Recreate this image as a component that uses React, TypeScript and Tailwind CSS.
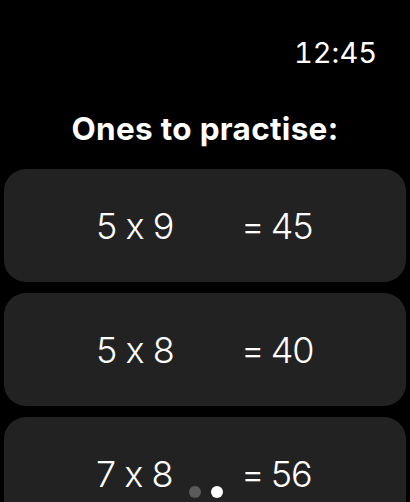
const rows = [
  { q: "5 x 9", a: "= 45" },
  { q: "5 x 8", a: "= 40" },
  { q: "7 x 8", a: "= 56" },
];

export default function App() {
  return (
    <div
      className="relative h-[502px] w-[410px] overflow-hidden bg-black text-white [font-feature-settings:'calt'_0]"
      style={{ fontFamily: "Inter, 'Noto Sans', sans-serif" }}
    >
      <div className="flex justify-end pr-[33px] pt-[38px]">
        <span className="text-[29px] leading-[30px] tabular-nums">12:45</span>
      </div>

      <h1 className="mt-[43px] text-center text-[31.5px] font-bold leading-[36px] tracking-[0.3px]">
        Ones to practise:
      </h1>

      <div className="mt-[22px] flex flex-col gap-[11px] px-[4px]">
        {rows.map((row) => (
          <div
            key={row.q}
            className="flex h-[113px] shrink-0 items-center rounded-[22px] bg-[#222222] pl-[92px]"
          >
            <span className="w-[145px] text-[36px] font-light leading-none tracking-[-1px]">{row.q}</span>
            <span className="text-[36px] font-light leading-none tracking-[-1px] [word-spacing:-2px]">{row.a}</span>
          </div>
        ))}
      </div>

      <div className="absolute bottom-[4px] left-0 right-0 flex justify-center gap-[10px] pl-[1px]">
        <span className="h-[12px] w-[12px] rounded-full bg-[#5a5a5a]" />
        <span className="h-[12px] w-[12px] rounded-full bg-white" />
      </div>
    </div>
  );
}
